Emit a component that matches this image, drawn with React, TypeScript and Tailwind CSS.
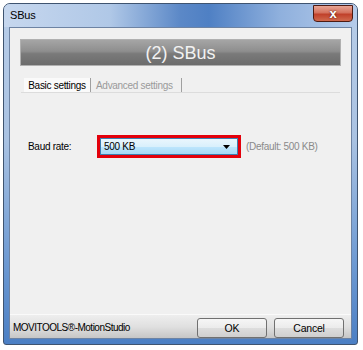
import React from 'react';

const font = { fontFamily: '"Liberation Sans", Arial, sans-serif' };

const CloseButton: React.FC = () => (
  <div className="mt-[1px] mr-[4px] ml-auto w-[40px] h-[17px] rounded-b-[4px] border border-[#4d1a12] bg-[linear-gradient(to_bottom,#e8a595_0%,#d4715d_45%,#c0402a_55%,#d06a4e_100%)] flex items-center justify-center">
    <span className="text-white text-[13px] font-bold leading-none [text-shadow:0_0_2px_#3a0a00]">x</span>
  </div>
);

const Button: React.FC<{ label: string }> = ({ label }) => (
  <button className="w-[70px] h-[20px] rounded-[3px] border border-[#707070] bg-[linear-gradient(to_bottom,#f6f6f6_0%,#ebebeb_50%,#dddddd_51%,#cfcfcf_100%)] text-[10.5px] tracking-[-0.2px] text-black leading-none">
    {label}
  </button>
);

export default function App() {
  return (
    <div className="w-[363px] h-[350px] bg-white pt-[3px] pl-[3px]" style={font}>
      <div className="w-[355px] h-[342px] rounded-t-[7px] rounded-b-[3px] border border-[#3f5470] bg-[linear-gradient(to_bottom,#b8cde8_0%,#a9c2e2_40%,#6f9bd3_75%,#4b7fc4_100%)] flex flex-col">
        {/* title bar */}
        <div className="h-[23px] flex items-start rounded-t-[6px] bg-[linear-gradient(to_right,#c6d7ee_0%,#b0c8e7_30%,#5b88c7_50%,#4f80c4_58%,#8fb0dd_78%,#b5cbea_100%)]">
          <span className="ml-[6px] mt-[6px] text-[11px] tracking-[-0.2px] leading-none text-black">SBus</span>
          <CloseButton />
        </div>
        {/* client */}
        <div className="mx-[5px] flex-1 border border-[#6d83a3] bg-[#f0f0f0] flex flex-col">
          <div className="mx-[10px] mt-[11px] h-[27px] border border-[#b0b0b0] bg-[linear-gradient(to_bottom,#a5a5a5_0%,#8e8e8e_45%,#7a7a7a_55%,#6c6c6c_100%)] flex items-center justify-center">
            <span className="text-[18px] leading-none text-[#f2f2f2]">(2) SBus</span>
          </div>
          {/* tabs */}
          <div className="mx-[11px] mt-[12px] h-[15px] border-b border-[#dcdcdc] flex items-stretch text-[10px] tracking-[-0.3px]">
            <div className="ml-[3px] w-[67px] bg-[#fafafa] flex items-center justify-center text-black border-r border-[#a0a0a0]">
              Basic settings
            </div>
            <div className="pl-[5px] pr-[8px] flex items-center text-[#9a9a9a] border-r border-[#a0a0a0]">
              Advanced settings
            </div>
          </div>
          {/* baud rate */}
          <div className="mt-[42px] flex items-center text-[10px] tracking-[-0.3px]">
            <span className="ml-[18px] w-[69px] text-black">Baud rate:</span>
            <div className="w-[144px] h-[23px] border-[3px] border-[#e3000b] flex">
              <div className="flex-1 border border-[#3c7fb1] bg-[linear-gradient(to_bottom,#eaf6fd_0%,#d9f0fc_50%,#bee6fd_51%,#a7d9f5_100%)] flex items-center px-[3px]">
                <span className="text-black">500 KB</span>
                <svg className="ml-auto mr-[4px]" width="7" height="4" viewBox="0 0 7 4">
                  <path d="M0 0 L7 0 L3.5 4 Z" fill="#000" />
                </svg>
              </div>
            </div>
            <span className="ml-[5px] text-[#8a8a8a]">(Default: 500 KB)</span>
          </div>
          <div className="flex-1" />
          {/* bottom band */}
          <div className="h-[24px] border-t border-[#fafafa] bg-[linear-gradient(to_bottom,#eeeeee_0%,#e0e0e0_50%,#c6c6c6_100%)] flex items-end">
            <span className="ml-[3px] mb-[3px] text-[10px] tracking-[-0.5px] text-black">MOVITOOLS®-MotionStudio</span>
            <div className="ml-auto mr-[7px] flex gap-[7px]">
              <Button label="OK" />
              <Button label="Cancel" />
            </div>
          </div>
        </div>
        <div className="h-[5px]" />
      </div>
    </div>
  );
}
